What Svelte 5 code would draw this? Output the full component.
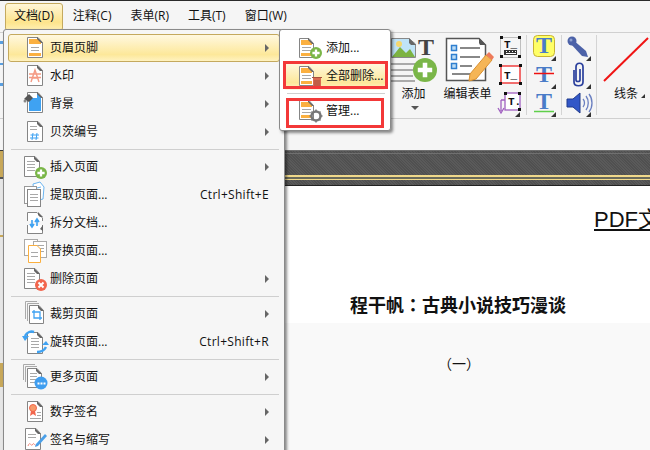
<script>
  const menus = [
    { label: '文档(D)', active: true },
    { label: '注释(C)' },
    { label: '表单(R)' },
    { label: '工具(T)' },
    { label: '窗口(W)' }
  ];

  const items = [
    { icon: 'header', label: '页眉页脚', arrow: true, active: true },
    { icon: 'watermark', label: '水印', arrow: true },
    { icon: 'background', label: '背景', arrow: true },
    { icon: 'number', label: '贝茨编号', arrow: true },
    { sep: true },
    { icon: 'insert', label: '插入页面', arrow: true },
    { icon: 'extract', label: '提取页面...', keys: 'Ctrl+Shift+E' },
    { icon: 'split', label: '拆分文档...' },
    { icon: 'replace', label: '替换页面...' },
    { icon: 'remove', label: '删除页面', arrow: true },
    { sep: true },
    { icon: 'crop', label: '裁剪页面', arrow: true },
    { icon: 'rotate', label: '旋转页面...', keys: 'Ctrl+Shift+R' },
    { sep: true },
    { icon: 'more', label: '更多页面', arrow: true },
    { sep: true },
    { icon: 'sign', label: '数字签名', arrow: true },
    { icon: 'initial', label: '签名与缩写', arrow: true }
  ];
</script>

{#snippet doc(x, y, w, h, stroke = '#858585')}
  <path d="M{x + 0.5} {y + 0.5}H{x + w - 5}L{x + w - 0.5} {y + 5.5}V{y + h - 0.5}H{x + 0.5}Z" fill="#fff" stroke={stroke} />
  <path d="M{x + w - 6} {y}L{x + w} {y + 6}H{x + w - 3}L{x + w - 6} {y + 3}Z" fill="#666" />
{/snippet}

{#snippet lines(x, y, w, n, gap = 3)}
  {#each Array(n) as _, i}
    <path d="M{x} {y + i * gap + 0.5}H{x + w}" stroke="#a8a8a8" />
  {/each}
{/snippet}

{#snippet orangeDoc(x, y)}
  {@render doc(x, y, 15, 20)}
  <path d="M{x + 2} {y + 2}H{x + 9}L{x + 13} {y + 6}V{y + 7}H{x + 2}Z" fill="#fbb040" />
  {@render lines(x + 3, y + 9, 9, 2)}
  <rect x={x + 2} y={y + 15} width="11" height="3" fill="#fbb040" />
{/snippet}

{#snippet plusBadge(cx, cy, r)}
  <circle {cx} {cy} {r} fill="#7ab648" />
  <path d="M{cx - r * 0.6} {cy}H{cx + r * 0.6}M{cx} {cy - r * 0.6}V{cy + r * 0.6}" stroke="#fff" stroke-width={r * 0.38} />
{/snippet}

{#snippet icon(name)}
  <svg class="ico" width="28" height="28" viewBox="0 0 28 28" aria-hidden="true">
    {#if name === 'header'}
      {@render doc(5, 3, 16, 21)}
      <path d="M7 5H15L19 9V10H7Z" fill="#fbb040" />
      {@render lines(9, 13, 8, 2)}
      <rect x="7" y="19" width="12" height="3" fill="#fbb040" />
    {:else if name === 'watermark'}
      {@render doc(5, 3, 16, 21)}
      <path d="M9 20L13 8L17 20M10 16H16M7 12H19M7 15.5H19" fill="none" stroke="#f49a84" stroke-width="1.4" />
    {:else if name === 'background'}
      {@render doc(5, 2, 16, 21)}
      <path d="M7 8H15V4L19 8V21H7Z" fill="#3fa2f2" />
      <path d="M2 9L7 4L11 8L7 12Z" fill="#555" />
      <circle cx="3" cy="11" r="1.5" fill="#888" />
    {:else if name === 'number'}
      {@render doc(5, 3, 16, 21)}
      {@render lines(8, 8, 7, 2)}
      <path d="M11 15L10 22M15 15L14 22M8.5 17H17M8 20H16.500" fill="none" stroke="#3fa2f2" />
    {:else if name === 'insert'}
      {@render doc(2, 3, 16, 21)}
      {@render lines(5, 8, 8, 4)}
      {@render plusBadge(19, 20, 6)}
    {:else if name === 'extract'}
      <path d="M11 3L18 1L22 6L21 18L13 20Z" fill="#fff" stroke="#6ab4f0" />
      <path d="M15 7L19 6M15 10L19 9" stroke="#6ab4f0" />
      <rect x="2.500" y="5.500" width="12" height="17" fill="#fff" stroke="#999" />
      <rect x="5.500" y="8.500" width="13" height="17" fill="#fff" stroke="#858585" />
      {@render lines(8, 13, 8, 3, 3)}
    {:else if name === 'split'}
      <path d="M5.500 12V3.500H15L20.500 9V12M5.500 16V24.500H20.500V16" fill="#fff" stroke="#858585" />
      <path d="M16 3L21 8H18L16 6Z" fill="#666" />
      <path d="M18 20L21 16V22Z" fill="#666" />
      <path d="M10 11V17M8 15L10 18L12 15M15 17V11M13 13L15 10L17 13" fill="none" stroke="#3fa2f2" stroke-width="1.6" />
    {:else if name === 'replace'}
      <rect x="2.500" y="2.500" width="13" height="16" fill="#fff" stroke="#aaa" />
      <rect x="11.500" y="4.500" width="13" height="16" fill="#fff" stroke="#aaa" />
      {@render lines(13, 8, 9, 3, 3)}
      <path d="M6.500 8.500H15L18.500 12V25.500H6.500Z" fill="#fff" stroke="#fbb040" />
      {@render lines(9, 15, 7, 2, 4)}
    {:else if name === 'remove'}
      {@render doc(2, 3, 16, 21)}
      {@render lines(5, 8, 8, 4)}
      <circle cx="19" cy="20" r="6" fill="#f2664e" />
      <path d="M16.500 17.500L21.500 22.500M21.500 17.500L16.500 22.500" stroke="#fff" stroke-width="2" />
    {:else if name === 'crop'}
      <path d="M3.500 19V1.500H15M5.500 21V3.500H17" fill="none" stroke="#aaa" />
      {@render doc(7, 5, 15, 19)}
      <path d="M10 12H18V20M12 10V18H20" fill="none" stroke="#3fa2f2" stroke-width="1.3" />
    {:else if name === 'rotate'}
      {@render doc(5, 4, 16, 22)}
      {@render lines(9, 10, 8, 4, 3)}
      <path d="M3 8C5 4 9 3 12 4" fill="none" stroke="#3fa2f2" stroke-width="2.500" />
      <path d="M0 8H7L3 13Z" fill="#3fa2f2" />
      <path d="M24 19C22 23 18 24 15 24" fill="none" stroke="#3fa2f2" stroke-width="2.500" />
      <path d="M27 17H20L24 13Z" fill="#3fa2f2" />
    {:else if name === 'more'}
      <path d="M1.500 17V1.500H13M3.500 19V3.500H15" fill="none" stroke="#aaa" />
      {@render doc(5, 5, 15, 20)}
      {@render lines(8, 10, 7, 4, 3)}
      <circle cx="19" cy="20" r="6.500" fill="#3f9ef0" />
      <path d="M15.500 19.500h2v2h-2zM18.500 19.500h2v2h-2zM21.500 19.500h2v2h-2z" fill="#fff" />
    {:else if name === 'sign'}
      {@render doc(5, 3, 16, 21)}
      <circle cx="11" cy="10" r="3.500" fill="#f79a6a" stroke="#f2664e" />
      <path d="M9 13L8 18L11 16L14 18L13 13Z" fill="#f2664e" />
      {@render lines(15, 14, 4, 2)}
      {@render lines(8, 20, 11, 1)}
    {:else if name === 'initial'}
      {@render doc(3, 2, 16, 22)}
      {@render lines(6, 8, 8, 2)}
      <path d="M6 20C8 14 9 22 11 18C12 16 13 21 15 19" fill="none" stroke="#f2887a" />
      <path d="M14 18L23 8L25 10L16 20L13 21Z" fill="#4a9fe8" />
    {:else if name === 'subadd'}
      {@render orangeDoc(1, 4)}
      {@render plusBadge(18, 19, 6)}
    {:else if name === 'subdelete'}
      {@render orangeDoc(1, 4)}
      <rect x="15" y="16" width="8" height="9" fill="#d96a50" />
      <path d="M14 15.500H24M17 18V24M19 18V24M21 18V24" stroke="#a8503c" />
    {:else if name === 'submanage'}
      {@render orangeDoc(1, 3)}
      <circle cx="18" cy="19" r="4.500" fill="none" stroke="#777" stroke-width="2.500" />
      <path d="M18 12.500V25.500M11.500 19H24.500M13.500 14.500L22.500 23.500M22.500 14.500L13.500 23.500" stroke="#777" stroke-width="1.500" stroke-dasharray="2 9" />
    {/if}
  </svg>
{/snippet}

{#snippet corner()}
  <path d="M24 23V28H19Z" fill="#333" />
{/snippet}

<div class="app">
  <nav class="menubar">
    {#each menus as m}
      <span class="menu" class:active={m.active}>{m.label}</span>
    {/each}
  </nav>

  <section class="ribbon">
    <div class="tool tool-add">
      <svg width="54" height="54" viewBox="0 0 54 54" aria-hidden="true">
        <path d="M3.500 5.500H21L27.500 11V24.500H3.500Z" fill="#bfe3f7" stroke="#888" />
        <circle cx="11" cy="11" r="3" fill="#f5d76e" />
        <path d="M4 24L12 14L18 20L22 16L27 24Z" fill="#7cb342" />
        <path d="M21 5L28 12H23L21 10Z" fill="#666" />
        <text x="30" y="22" class="big-t">T</text>
        <path d="M3 31H27M3 37H25M3 43H25M3 48H27" stroke="#aaa" stroke-width="2" />
        {@render plusBadge(37, 37, 12)}
      </svg>
      <span>添加</span>
      <i class="drop"></i>
    </div>

    <div class="tool tool-form">
      <svg width="54" height="54" viewBox="0 0 54 54" aria-hidden="true">
        <path d="M4.500 5.500H37L43.500 12V47.500H4.500Z" fill="#fff" stroke="#555" stroke-width="1.500" />
        <path d="M37 5L44 12H38L37 10Z" fill="#555" />
        <path d="M9.500 12.500h5v5h-5zM9.500 21.500h5v5h-5zM9.500 30.500h5v5h-5z" fill="#bcdcf5" stroke="#2f7fd0" stroke-width="1.500" />
        <path d="M18 15H38M18 24H38M18 33H30M10 41H28" stroke="#888" stroke-width="2" />
        <path d="M28 41L44 22L50 27L34 46L27 48Z" fill="#f5b556" stroke="#d99030" />
        <path d="M44 22L47 19L52 24L50 27Z" fill="#ee7a5a" />
      </svg>
      <span>编辑表单</span>
    </div>

    <div class="col col-1">
      <svg width="28" height="28" viewBox="0 0 28 28" aria-hidden="true">
        <rect x="4.500" y="4.500" width="20" height="20" fill="none" stroke="#888" stroke-dasharray="1 1" />
        <path d="M4 3h3v3h-3zM22 3h3v3h-3zM4 22h3v3h-3zM22 22h3v3h-3z" fill="#111" />
        <text x="8" y="15" class="small-t">T_</text>
        <path d="M8 17h13v5h-13z" fill="#333" />
        <path d="M10 18.500h1M13 18.500h1M16 18.500h1M19 18.500h1M10 20.500h10" stroke="#fff" />
      </svg>
      <svg width="28" height="28" viewBox="0 0 28 28" aria-hidden="true">
        <rect x="5" y="5" width="19" height="17" fill="#fff" stroke="#e22" stroke-width="1.300" />
        <path d="M3 3h3v3h-3zM23 3h3v3h-3zM3 21h3v3h-3zM23 21h3v3h-3z" fill="#111" />
        <text x="8" y="18" class="small-t">T_</text>
      </svg>
      <svg width="28" height="28" viewBox="0 0 28 28" aria-hidden="true">
        <rect x="9" y="4" width="15" height="17" fill="#fff" stroke="#a060c0" stroke-width="1.300" />
        <path d="M8 3h3v3h-3zM22 3h3v3h-3zM22 19h3v3h-3z" fill="#111" />
        <text x="12" y="16" class="small-t">T.</text>
        <path d="M5 11H9M5 11V22M2 19L5 24L8 19" fill="none" stroke="#a060c0" stroke-width="1.300" />
        {@render corner()}
      </svg>
    </div>
    <div class="vsep"></div>

    <div class="col col-2">
      <svg width="34" height="28" viewBox="0 0 34 28" aria-hidden="true">
        <rect x="6.500" y="2.500" width="21" height="21" rx="4" fill="#ffff66" stroke="#c8b432" />
        <text x="17" y="20" class="blue-t">T</text>
        <path d="M29 23V28H24Z" fill="#333" />
      </svg>
      <svg width="34" height="28" viewBox="0 0 34 28" aria-hidden="true">
        <text x="17" y="21" class="blue-t">T</text>
        <path d="M7 12.500H27" stroke="#e11" stroke-width="1.500" />
        <path d="M29 23V28H24Z" fill="#333" />
      </svg>
      <svg width="34" height="28" viewBox="0 0 34 28" aria-hidden="true">
        <text x="17" y="20" class="blue-t">T</text>
        <path d="M7 22.500H27" stroke="#5fcf4a" stroke-width="1.500" />
        <path d="M29 23V28H24Z" fill="#333" />
      </svg>
    </div>
    <div class="vsep"></div>

    <div class="col col-3">
      <svg width="34" height="28" viewBox="0 0 34 28" aria-hidden="true">
        <circle cx="10" cy="8" r="4.500" fill="#4c62a8" />
        <path d="M10 6L24 18L26 24L20 23L8 10Z" fill="#4c62a8" />
        <circle cx="9" cy="7" r="1.500" fill="#8fa0d0" />
        <path d="M29 23V28H24Z" fill="#333" />
      </svg>
      <svg width="34" height="28" viewBox="0 0 34 28" aria-hidden="true">
        <path d="M12 9V21C12 26 21 26 21 21V6C21 1 14 1 14 6V19C14 21 18 21 18 19V8" fill="none" stroke="#2a3f9c" stroke-width="1.700" />
        <path d="M29 23V28H24Z" fill="#333" />
      </svg>
      <svg width="34" height="28" viewBox="0 0 34 28" aria-hidden="true">
        <path d="M5 10H11L18 4V24L11 18H5Z" fill="#3257c8" stroke="#1f3a8c" />
        <path d="M21 10C23 12 23 16 21 18M24 7C27 11 27 17 24 21M27 5C31 10 31 18 27 23" fill="none" stroke="#6a7fc0" stroke-width="1.300" />
        <path d="M29 23V28H24Z" fill="#333" />
      </svg>
    </div>
    <div class="vsep"></div>

    <div class="tool tool-line">
      <svg width="53" height="54" viewBox="0 0 53 54" aria-hidden="true">
        <path d="M7 48L51 5" stroke="#f01414" stroke-width="2" />
      </svg>
      <span>线条</span>
      <i class="corner"></i>
    </div>
  </section>

  <div class="gap-bar"></div>

  <div class="body">
    <div class="sidebar"></div>
    <main class="doc-area">
      <div class="band"></div>
      <div class="sheet">
        <div class="sheet-white">
          <p class="pdf-title">PDF文档</p>
          <h1>程干帆：古典小说技巧漫谈</h1>
        </div>
        <div class="sheet-grey">
          <p class="num">（一）</p>
        </div>
      </div>
    </main>
  </div>

  <!-- 打开的下拉菜单 -->
  <div class="dropdown">
    {#each items as it}
      {#if it.sep}
        <div class="sep"></div>
      {:else}
        <div class="row" class:hot={it.active}>
          {@render icon(it.icon)}
          <span class="label">{it.label}</span>
          {#if it.keys}<span class="keys">{it.keys}</span>{/if}
          {#if it.arrow}<i class="arrow"></i>{/if}
        </div>
      {/if}
    {/each}
  </div>

  <div class="submenu">
    <div class="row">{@render icon('subadd')}<span class="label">添加...</span></div>
    <div class="row hot plain">{@render icon('subdelete')}<span class="label">全部删除...</span></div>
    <div class="sep"></div>
    <div class="row">{@render icon('submanage')}<span class="label">管理...</span></div>
  </div>

  <div class="mark mark-1"></div>
  <div class="mark mark-2"></div>
</div>

<style>
  :global(body) {
    margin: 0;
  }

  .app {
    position: relative;
    width: 650px;
    height: 450px;
    overflow: hidden;
    background: #f5f5f5;
    font: 12px/16px "Open Sans", "Noto Sans CJK SC", sans-serif;
    color: #111;
    border-top: 1px solid #2a2a2a;
    box-sizing: border-box;
  }

  /* ---- Menu bar ---- */
  .menubar {
    display: flex;
    height: 31px;
    padding: 2px 0 0 5px;
    box-sizing: border-box;
    align-items: flex-start;
  }

  .menu {
    padding: 5px 0;
    margin-right: 19px;
    white-space: nowrap;
  }

  .menu.active {
    margin-right: 10px;
    padding: 4px 8px;
    height: 18px;
    border: 1px solid #c4a95e;
    border-radius: 3px;
    background: linear-gradient(#fff6d8, #fde48c 70%, #fff0b4);
  }

  /* ---- Ribbon ---- */
  .ribbon {
    display: flex;
    height: 87px;
    padding-left: 388px;
    box-sizing: border-box;
    border-top: 1px solid #d0d0d0;
    border-bottom: 1px solid #d0d0d0;
    /* 菜单左边露出的工具栏图标 */
    background:
      linear-gradient(#5a9fe0 0 0) 0 8px / 3px 3px no-repeat,
      linear-gradient(#5a9fe0 0 0) 0 30px / 3px 2px no-repeat,
      linear-gradient(#5a9fe0 0 0) 0 50px / 3px 3px no-repeat;
  }

  .tool {
    position: relative;
    display: flex;
    flex-direction: column;
    align-items: center;
    width: 54px;
    flex: none;
  }

  .tool span {
    line-height: 14px;
    margin-left: -3px;
    white-space: nowrap;
  }

  .tool-line {
    width: 53px;
  }

  .tool-line span {
    margin-left: 5px;
  }

  .drop {
    width: 0;
    height: 0;
    margin-top: 5px;
    border: 4px solid transparent;
    border-top: 4px solid #555;
    border-bottom: 0;
  }

  .corner {
    position: absolute;
    left: 44px;
    top: 61px;
    width: 0;
    height: 0;
    border-left: 4px solid transparent;
    border-bottom: 4px solid #333;
  }

  .big-t {
    font: bold 24px "Liberation Serif", serif;
    fill: #444;
  }

  .small-t {
    font: bold 11px "Liberation Mono", monospace;
    fill: #111;
  }

  .blue-t {
    font: bold 24px "Liberation Serif", serif;
    fill: #4a7cc8;
    text-anchor: middle;
  }

  .col {
    display: flex;
    flex-direction: column;
    flex: none;
  }

  .col svg {
    display: block;
  }

  .col-1 {
    width: 30px;
  }

  .col-2,
  .col-3 {
    width: 34px;
  }

  .vsep {
    flex: none;
    width: 1px;
    height: 80px;
    margin-top: 2px;
    background: #d4d4d4;
  }

  .gap-bar {
    height: 31px;
  }

  /* ---- Document area ---- */
  .body {
    display: flex;
  }

  .sidebar {
    width: 3px;
    height: 300px;
    flex: none;
    background: linear-gradient(
      #3a3a3a 0 1px,
      #c8a85a 1px 27px,
      #555 27px 29px,
      #e6e6e6 29px 85px,
      #c8a85a 85px 87px,
      #e6e6e6 87px 213px,
      #c8a85a 213px 237px,
      #e6e6e6 237px
    );
  }

  .doc-area {
    flex: 1;
    min-width: 0;
    margin-left: 282px;
  }

  .band {
    height: 36px;
    box-sizing: border-box;
    background:
      linear-gradient(#6e6e6e 0 1px, transparent 1px 3px, #707070 3px 4px, transparent 4px),
      linear-gradient(transparent 25px, #f0d98a 25px 27px, #6a6a5a 27px 29px, #f0d98a 29px 30px, transparent 30px 35px, #222 35px),
      repeating-linear-gradient(45deg, #505050 0 1px, #5a5a5a 1px 2px);
  }

  .sheet {
    background: #fff;
  }

  .sheet-white {
    height: 137px;
    box-sizing: border-box;
    padding-top: 22px;
  }

  .pdf-title {
    margin: 0 0 0 309px;
    font: 22px/24px "Liberation Sans", "Noto Sans CJK SC", sans-serif;
    text-decoration: underline;
    white-space: nowrap;
  }

  h1 {
    margin: 59px 0 0 65px;
    font: bold 18px/26px "Noto Sans CJK TC", sans-serif;
    white-space: nowrap;
  }

  .sheet-grey {
    height: 127px;
    box-sizing: border-box;
    padding-top: 32px;
    background: #f9f9f9;
  }

  .num {
    margin: 0 0 0 153px;
    font: 14px/16px "Noto Sans CJK SC", sans-serif;
  }

  /* ---- Menus ---- */
  .dropdown,
  .submenu {
    position: absolute;
    box-sizing: border-box;
    background: #f6f6f6;
    border: 1px solid #8a8a8a;
    border-radius: 3px;
    box-shadow: 2px 2px 3px rgba(0, 0, 0, 0.45);
  }

  .dropdown {
    left: 3px;
    top: 28px;
    width: 282px;
    height: 440px;
    padding: 4px;
  }

  .submenu {
    left: 279px;
    top: 28px;
    width: 112px;
    height: 102px;
    padding: 4px;
    background: #fff;
  }

  .row {
    display: flex;
    align-items: center;
    height: 28px;
    box-sizing: border-box;
    padding-left: 14px;
    padding-right: 10px;
    border: 1px solid transparent;
    border-radius: 3px;
    white-space: nowrap;
  }

  .submenu .row {
    padding-left: 14px;
    padding-right: 0;
  }

  .row.hot {
    border-color: #c4a95e;
    background: linear-gradient(#fff8e0, #fde89a 75%, #fff2c0);
  }

  .row.plain {
    border-color: transparent;
  }

  .ico {
    flex: none;
    margin-left: -1px;
  }

  .label {
    flex: 1;
    line-height: 16px;
  }

  .keys {
    letter-spacing: 0.3px;
  }

  .arrow {
    width: 0;
    height: 0;
    border-left: 4px solid #666;
    border-top: 4px solid transparent;
    border-bottom: 4px solid transparent;
  }

  .sep {
    height: 1px;
    margin: 3px 1px 3px 3px;
    background: #cfcfcf;
  }

  .mark {
    position: absolute;
    box-sizing: border-box;
    border: 3px solid #f33838;
  }

  .mark-1 {
    left: 283px;
    top: 60px;
    width: 105px;
    height: 28px;
  }

  .mark-2 {
    left: 286px;
    top: 97px;
    width: 98px;
    height: 30px;
  }
</style>
